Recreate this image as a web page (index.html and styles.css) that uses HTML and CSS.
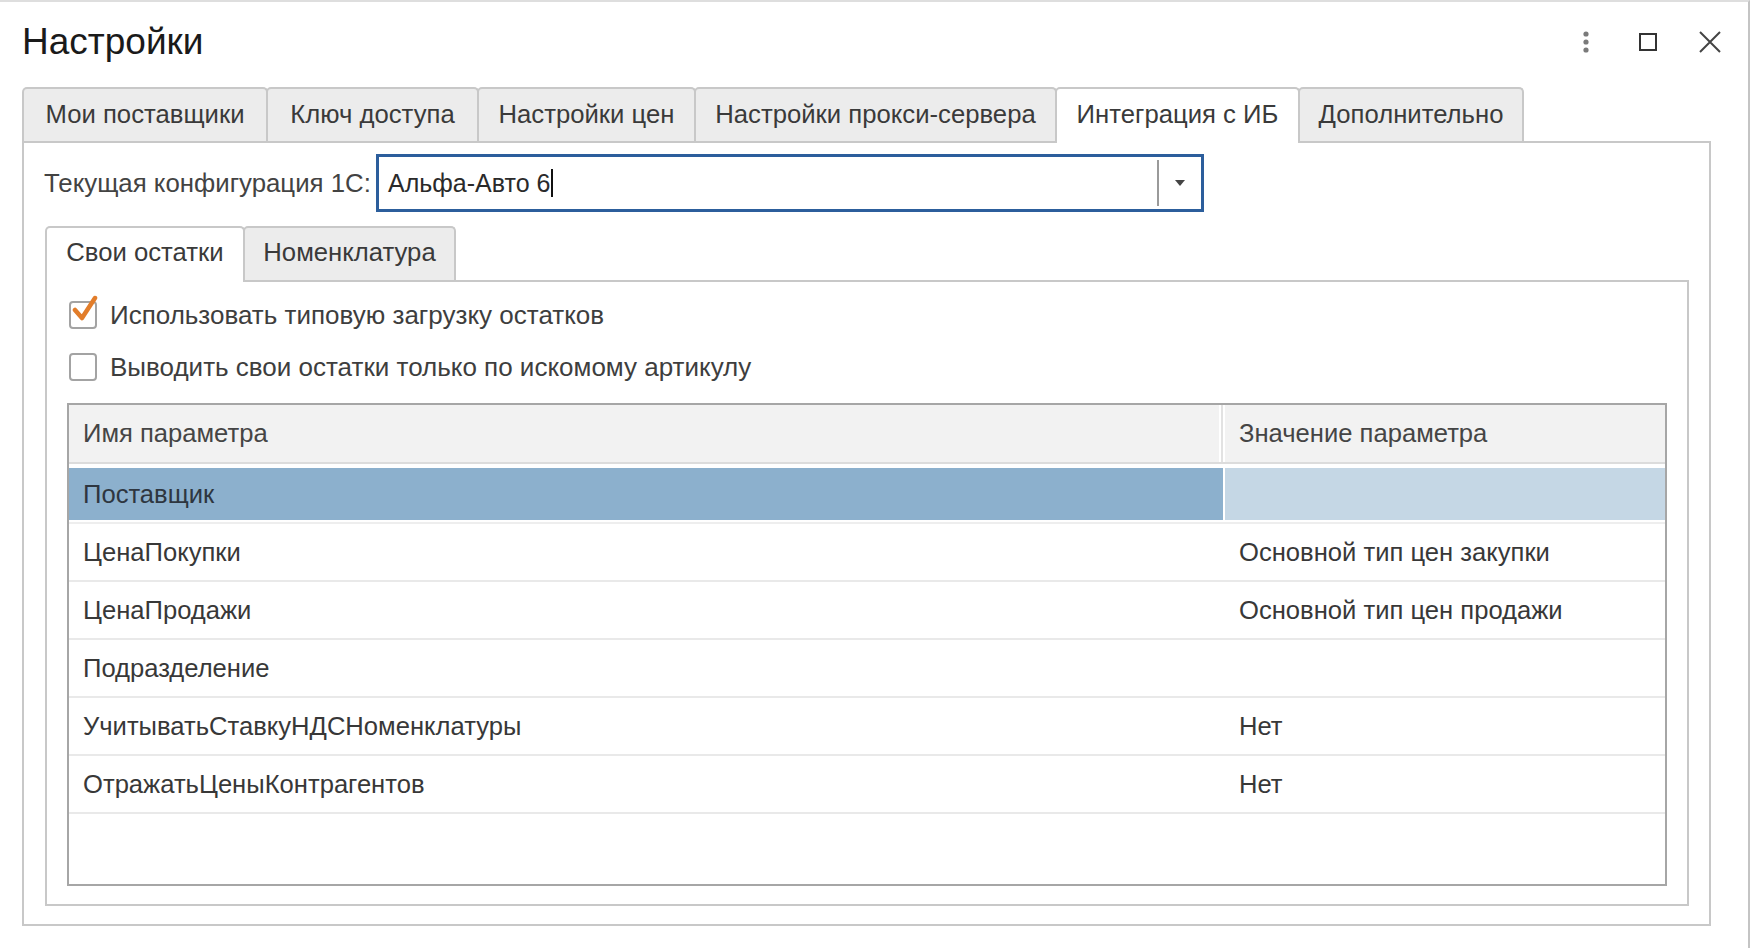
FILE: index.html
```html
<!DOCTYPE html>
<html lang="ru">
<head>
<meta charset="utf-8">
<title>Настройки</title>
<link rel="stylesheet" href="styles.css">
</head>
<body>
<div class="window">
  <div class="titlebar">
    <div class="title">Настройки</div>
    <div class="win-icons">
      <svg class="ic-kebab" width="10" height="22" viewBox="0 0 10 22"><circle cx="5" cy="3" r="2.6" fill="#7a7a7a"/><circle cx="5" cy="11" r="2.6" fill="#7a7a7a"/><circle cx="5" cy="19" r="2.6" fill="#7a7a7a"/></svg>
      <svg class="ic-max" width="20" height="20" viewBox="0 0 20 20"><rect x="2" y="2" width="16" height="16" fill="none" stroke="#333" stroke-width="2"/></svg>
      <svg class="ic-close" width="24" height="24" viewBox="0 0 24 24"><path d="M2 2 L22 22 M22 2 L2 22" stroke="#444" stroke-width="2" fill="none"/></svg>
    </div>
  </div>

  <div class="tabbar outer-tabs">
    <div class="tab t-suppliers">Мои поставщики</div>
    <div class="tab t-key">Ключ доступа</div>
    <div class="tab t-prices">Настройки цен</div>
    <div class="tab t-proxy">Настройки прокси-сервера</div>
    <div class="tab t-integr active">Интеграция с ИБ</div>
    <div class="tab t-extra">Дополнительно</div>
  </div>
  <div class="panel outer-panel">
    <div class="config-row">
      <label class="config-label">Текущая конфигурация 1С:</label>
      <div class="combo">
        <div class="combo-text">Альфа-Авто 6<span class="caret"></span></div>
        <div class="combo-btn">
          <svg width="12" height="8" viewBox="0 0 12 8"><path d="M1 1 L11 1 L6 7 Z" fill="#444"/></svg>
        </div>
      </div>
    </div>

    <div class="tabbar inner-tabs">
      <div class="tab t-own active">Свои остатки</div>
      <div class="tab t-nom">Номенклатура</div>
    </div>
    <div class="panel inner-panel">
      <div class="check-row">
        <span class="checkbox checked">
          <svg class="checkmark" width="30" height="30" viewBox="0 0 30 30"><path d="M5 15 L12 23 L25 3" fill="none" stroke="#e27d2a" stroke-width="4.5" stroke-linecap="round" stroke-linejoin="round"/></svg>
        </span>
        <span class="check-label">Использовать типовую загрузку остатков</span>
      </div>
      <div class="check-row">
        <span class="checkbox"></span>
        <span class="check-label">Выводить свои остатки только по искомому артикулу</span>
      </div>

      <div class="grid">
        <div class="grid-head">
          <div class="cell">Имя параметра</div>
          <div class="cell">Значение параметра</div>
        </div>
        <div class="grid-body">
          <div class="row selected">
            <div class="cell">Поставщик</div>
            <div class="cell"></div>
          </div>
          <div class="row">
            <div class="cell">ЦенаПокупки</div>
            <div class="cell">Основной тип цен закупки</div>
          </div>
          <div class="row">
            <div class="cell">ЦенаПродажи</div>
            <div class="cell">Основной тип цен продажи</div>
          </div>
          <div class="row">
            <div class="cell">Подразделение</div>
            <div class="cell"></div>
          </div>
          <div class="row">
            <div class="cell">УчитыватьСтавкуНДСНоменклатуры</div>
            <div class="cell">Нет</div>
          </div>
          <div class="row">
            <div class="cell">ОтражатьЦеныКонтрагентов</div>
            <div class="cell">Нет</div>
          </div>
        </div>
      </div>
    </div>
  </div>
</div>
</body>
</html>
```

FILE: styles.css
```css
* { box-sizing: border-box; }
html, body { margin: 0; padding: 0; background: #fff; }
body {
  width: 1754px;
  height: 948px;
  overflow: hidden;
  font-family: "Liberation Sans", Arial, sans-serif;
  font-size: 26px;
  color: #3a3a3a;
}
.window {
  width: 1750px;
  height: 948px;
  border-top: 2px solid #dedede;
  border-right: 2px solid #c4c4c4;
}
.titlebar {
  height: 80px;
  display: flex;
  align-items: center;
  padding-left: 22px;
}
.title {
  font-size: 37px;
  color: #1a1a1a;
}
.win-icons {
  margin-left: auto;
  display: flex;
  align-items: center;
  padding-right: 26px;
}
.ic-kebab { margin-right: 47px; }
.ic-max { margin-right: 40px; }

.tabbar {
  display: flex;
  align-items: flex-end;
}
.outer-tabs {
  margin-top: 5px;
  margin-left: 22px;
  height: 54px;
}
.tab {
  height: 54px;
  padding: 0 0 2px 0;
  display: flex;
  align-items: center;
  justify-content: center;
  background: #ececec;
  border: 2px solid #c8c8c8;
  border-bottom: none;
  border-radius: 5px 5px 0 0;
  margin-right: -2px;
  white-space: nowrap;
  color: #3a3a3a;
  font-size: 25.7px;
}
.tab.active {
  background: #fff;
  height: 56px;
  margin-bottom: -2px;
  position: relative;
  z-index: 1;
  padding-bottom: 4px;
}
.t-suppliers { width: 246px; }
.t-key { width: 213px; }
.t-prices { width: 219px; }
.t-proxy { width: 363px; }
.t-integr { width: 245px; }
.t-extra { width: 226px; }
.t-own { width: 200px; }
.t-nom { width: 213px; }

.panel {
  border: 2px solid #c8c8c8;
  background: #fff;
}
.outer-panel {
  margin-left: 22px;
  width: 1689px;
  height: 785px;
  padding: 11px 20px 0 20px;
}
.config-row {
  display: flex;
  align-items: center;
}
.config-label {
  width: 332px;
  white-space: nowrap;
  color: #434343;
  font-size: 25.8px;
}
.combo {
  width: 828px;
  height: 58px;
  border: 3px solid #2c5e9c;
  display: flex;
  align-items: center;
}
.combo-text {
  flex: 1;
  padding-left: 9px;
  font-size: 25px;
  color: #2a2a2a;
  display: flex;
  align-items: center;
}
.caret {
  display: inline-block;
  width: 2px;
  height: 28px;
  background: #111;
  margin-left: 1px;
}
.combo-btn {
  width: 44px;
  height: 46px;
  border-left: 2px solid #9a9a9a;
  display: flex;
  align-items: center;
  justify-content: center;
}

.inner-tabs {
  margin-top: 14px;
  margin-left: 1px;
  height: 54px;
}
.inner-tabs .tab { padding-bottom: 3px; }
.inner-tabs .tab.active { padding-bottom: 5px; }
.inner-panel {
  width: 1644px;
  height: 626px;
  margin-left: 1px;
  padding: 19px 20px 0 22px;
}
.check-row {
  display: flex;
  align-items: center;
  height: 28px;
  margin-bottom: 24px;
}
.checkbox {
  width: 28px;
  height: 28px;
  border: 2px solid #a3a3a3;
  border-radius: 4px;
  position: relative;
  flex: none;
  background: #fff;
}
.checkmark {
  position: absolute;
  left: -1px;
  top: -8px;
}
.check-label {
  margin-left: 13px;
  color: #3e3e3e;
  white-space: nowrap;
}

.grid {
  margin-top: -2px;
  width: 1600px;
  height: 483px;
  border: 2px solid #a6a6a6;
  margin-left: -2px;
  font-size: 25.6px;
}
.grid-head {
  display: grid;
  grid-template-columns: 1154px 1fr;
  height: 59px;
  background: #f2f2f2;
  border-bottom: 2px solid #dcdcdc;
}
.grid-head .cell {
  display: flex;
  align-items: center;
  padding-left: 14px;
  color: #454545;
}
.grid-head .cell:first-child {
  border-right: 2px solid #e2e2e2;
  box-shadow: inset -2px 0 0 #fff;
}
.grid-head .cell:last-child { border-left: 2px solid #fff; }
.grid-body { padding-top: 2px; }
.row {
  display: grid;
  grid-template-columns: 1154px 1fr;
  height: 58px;
  border-bottom: 2px solid #e9e9e9;
}
.row .cell {
  display: flex;
  align-items: center;
  padding-left: 14px;
  color: #383838;
}
.row .cell:last-child { padding-left: 16px; }
.row.selected { border-bottom-color: #eeeeee; }
.row.selected .cell:first-child {
  background: #8cb0cd;
  box-shadow: inset 0 2px 0 #fff, inset 0 -2px 0 #fff;
  color: #2e3640;
}
.row.selected .cell:last-child {
  background: #c5d7e5;
  border-left: 2px solid #fff;
  box-shadow: inset 0 2px 0 #fff, inset 0 -2px 0 #fff;
}
```
